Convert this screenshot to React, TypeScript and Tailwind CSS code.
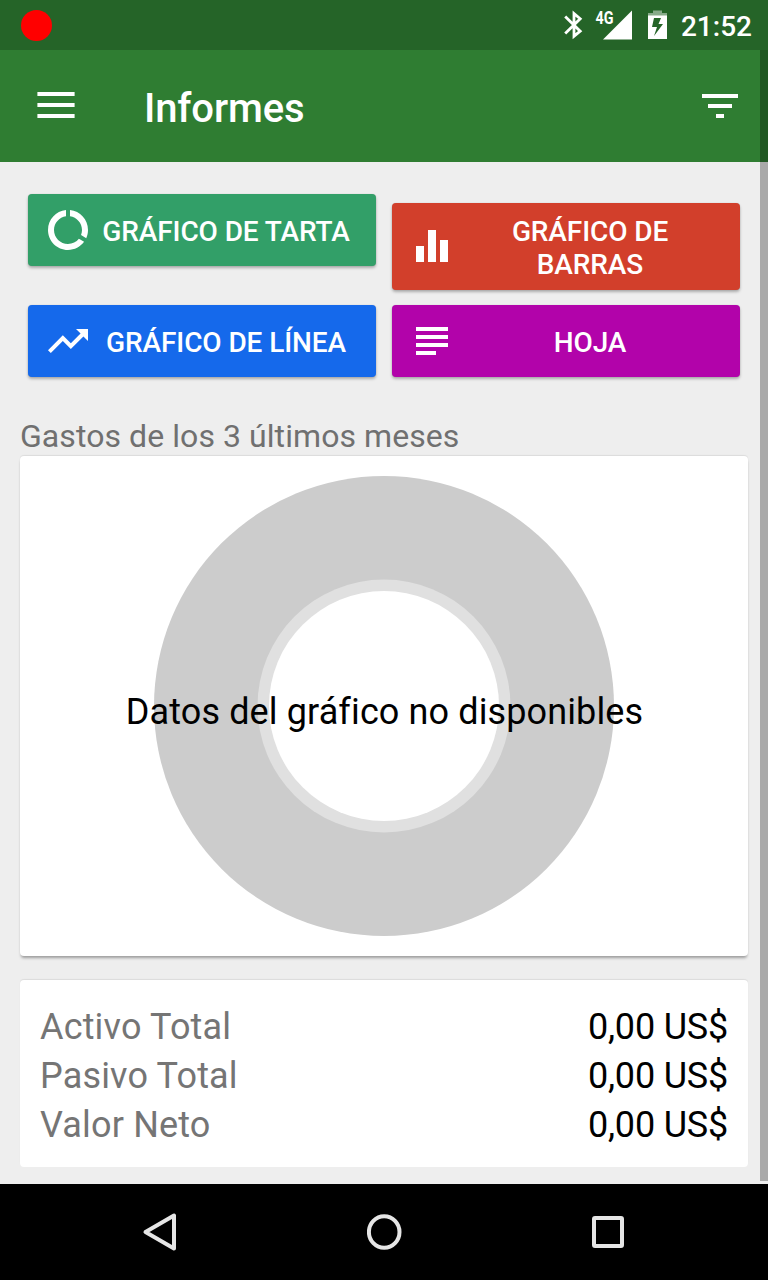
import type { ReactNode } from "react";

const SHADOW = "shadow-[0_2px_3px_rgba(0,0,0,0.28),0_0_1px_rgba(0,0,0,0.2)]";

function StatusBar() {
  return (
    <header className="flex h-[50px] shrink-0 items-center bg-[#256428] pl-[21px] pr-4">
      <div className="size-[31px] rounded-full bg-[#ff0000]" />
      <div className="ml-auto flex items-center">
        <svg className="mr-[10px] h-[30px] w-[19px]" viewBox="0 0 19 30" fill="none" stroke="#fff" strokeWidth="2.8">
          <path d="M1.2 6.5 16.2 21.2 10 26.2V3.6L16.2 8.8 1.2 23.5" />
        </svg>
        <svg className="mr-4 h-[30px] w-[39px] overflow-visible" viewBox="-3 0 39 30" fill="#fff">
          <path d="M36 0.5V29.5H7z" />
          <text x="-0.5" y="13.5" textLength="18" lengthAdjust="spacingAndGlyphs" className="font-[Roboto] text-[17.5px] font-bold">4G</text>
        </svg>
        <svg className="mr-[14px] h-[30px] w-[19px]" viewBox="0 0 19 30">
          <path fill="#fff" fillOpacity="0.45" d="M5 0.5h9V3h5v3H0V3h5z" />
          <path fill="#fff" fillRule="evenodd" d="M0 5.5h19v23.5H0zM6 8 4 17h5L6 26 15 14H10.5L13 8z" />
        </svg>
        <span className="pt-1 text-[28px] font-medium leading-8 text-white">21:52</span>
      </div>
    </header>
  );
}

function Toolbar() {
  return (
    <div className="flex h-28 shrink-0 items-center bg-[#2f7d32] pl-[37px] pr-[30px] text-white">
      <svg className="mb-0.5 h-[26px] w-[38px]" viewBox="0 0 38 26" fill="currentColor">
        <path d="M.4 0h37.2v4H.4zM.4 11h37.2v4H.4zM.4 22h37.2v4H.4z" />
      </svg>
      <h1 className="ml-[69px] mt-1.5 text-[40px] font-medium leading-[48px] tracking-[-0.12px]">Informes</h1>
      <svg className="ml-auto h-6 w-9" viewBox="0 0 36 24" fill="currentColor">
        <path d="M0 0h36v4H0zM6 10h24v4H6zM14 20h8v4h-8z" />
      </svg>
    </div>
  );
}

function ReportButton({ color, path, children }: { color: string; path: string; children: ReactNode }) {
  return (
    <button className={`flex w-[348px] items-center rounded-[4px] px-4 text-white ${SHADOW} ${color}`}>
      <svg className="size-12 shrink-0" viewBox="0 0 24 24" fill="currentColor">
        <path d={path} />
      </svg>
      <span className="flex-1 whitespace-nowrap pt-[3px] text-center text-[28px] font-medium leading-[33px] tracking-[-0.1px]">{children}</span>
    </button>
  );
}

function Total({ label }: { label: string }) {
  return (
    <div className="flex h-[49px] items-center justify-between text-[36px] leading-[49px]">
      <span className="tracking-[0.17px] text-[#757575]">{label}</span>
      <span className="tracking-[-0.2px] text-black">0,00 US$</span>
    </div>
  );
}

export default function App() {
  return (
    <div className="relative flex h-[1280px] w-[768px] flex-col overflow-hidden bg-[#eeeeee] font-[Roboto,sans-serif]">
      <StatusBar />
      <Toolbar />
      <main className="flex flex-1 flex-col px-5 pt-8">
        <div className="grid grid-cols-2 items-start gap-x-4 px-2">
          <ReportButton
            color="h-[72px] bg-[#329f68]"
            path="M13 2.05v3.03c3.39.49 6 3.39 6 6.92 0 .9-.18 1.75-.48 2.54l2.6 1.53c.56-1.24.88-2.62.88-4.07 0-5.18-3.95-9.45-9-9.95zM12 19c-3.87 0-7-3.13-7-7 0-3.53 2.61-6.43 6-6.92V2.05c-5.06.5-9 4.76-9 9.95 0 5.52 4.47 10 9.99 10 3.31 0 6.24-1.61 8.06-4.09l-2.6-1.53C16.17 17.98 14.21 19 12 19z"
          >
            GRÁFICO DE TARTA
          </ReportButton>
          <ReportButton color="mt-[9px] h-[87px] pb-px bg-[#d23f2b]" path="M10 20h4V4h-4v16zm-6 0h4v-8H4v8zM16 9v11h4V9h-4z">
            GRÁFICO DE
            <br />
            BARRAS
          </ReportButton>
          <ReportButton
            color="mt-[15px] h-[72px] bg-[#1569eb]"
            path="M16 6l2.29 2.29-4.88 4.88-4-4L2 16.59 3.41 18l6-6 4 4 6.3-6.29L22 12V6z"
          >
            GRÁFICO DE LÍNEA
          </ReportButton>
          <ReportButton color="mt-[15px] h-[72px] bg-[#b203aa]" path="M4 5h16v2H4zM4 9h16v2H4zM4 13h16v2H4zM4 17h10v2H4z">
            HOJA
          </ReportButton>
        </div>
        <h2 className="mt-10 h-[39px] text-[32px] leading-[38px] tracking-[0.07px] text-[#707070]">Gastos de los 3 últimos meses</h2>
        <section className="grid h-[500px] shrink-0 place-items-center rounded-[4px] bg-white shadow-[0_3px_3px_-1px_rgba(0,0,0,0.35),0_-1px_1px_rgba(0,0,0,0.08)]">
          <svg className="h-[460px] w-[600px]" viewBox="0 0 600 460">
            <circle cx="300" cy="230" r="230" fill="#cccccc" />
            <circle cx="300" cy="230" r="126.5" fill="#e0e0e0" />
            <circle cx="300" cy="230" r="115" fill="#fff" />
            <text x="300.5" y="248" textAnchor="middle" className="font-[Roboto] text-[36px] tracking-[0.12px]">
              Datos del gráfico no disponibles
            </text>
          </svg>
        </section>
        <section className="mt-6 flex h-[187px] shrink-0 flex-col rounded-[4px] bg-white px-5 pt-[23px] shadow-[0_-1px_1px_rgba(0,0,0,0.08)]">
          <Total label="Activo Total" />
          <Total label="Pasivo Total" />
          <Total label="Valor Neto" />
        </section>
      </main>
      <nav className="flex h-24 shrink-0 items-center justify-between bg-black pl-[142px] pr-36">
        <svg className="h-10 w-[35px]" viewBox="0 0 35 40" fill="none" stroke="#e6e6e6" strokeWidth="4" strokeLinejoin="round">
          <path d="M32 3.5v33L3.5 20z" />
        </svg>
        <svg className="h-10 w-9" viewBox="0 0 36 40" fill="none" stroke="#e6e6e6" strokeWidth="4">
          <ellipse cx="17.2" cy="20" rx="15.3" ry="15.8" />
        </svg>
        <svg className="h-10 w-[32px]" viewBox="0 0 32 40" fill="none" stroke="#e6e6e6" strokeWidth="4">
          <rect x="2" y="6" width="28" height="28" rx="1" />
        </svg>
      </nav>
      <div className="absolute right-0 top-[50px] h-[1131px] w-2 bg-black/29" />
    </div>
  );
}
